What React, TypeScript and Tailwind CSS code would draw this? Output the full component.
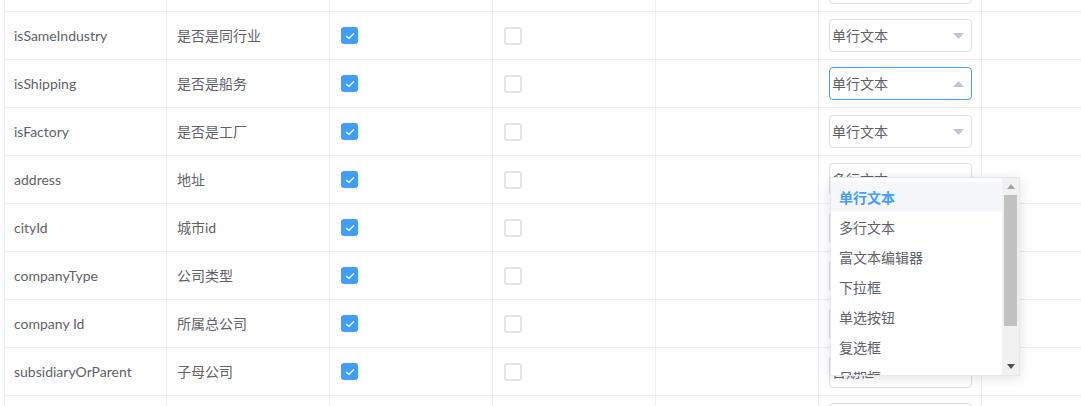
import React from 'react';

type Row = {
    field: string;
    label: string;
    required: boolean;
    control: string;
};

const rows: Row[] = [
    { field: '', label: '', required: false, control: '单行文本' },
    { field: 'isSameIndustry', label: '是否是同行业', required: true, control: '单行文本' },
    { field: 'isShipping', label: '是否是船务', required: true, control: '单行文本' },
    { field: 'isFactory', label: '是否是工厂', required: true, control: '单行文本' },
    { field: 'address', label: '地址', required: true, control: '多行文本' },
    { field: 'cityId', label: '城市id', required: true, control: '单行文本' },
    { field: 'companyType', label: '公司类型', required: true, control: '单行文本' },
    { field: 'company Id', label: '所属总公司', required: true, control: '单行文本' },
    { field: 'subsidiaryOrParent', label: '子母公司', required: true, control: '日期框' },
    { field: 'subsidiaryOrGroup', label: '', required: true, control: '单行文本' },
];

const options = ['单行文本', '多行文本', '富文本编辑器', '下拉框', '单选按钮', '复选框', '日期框'];

const Checkbox: React.FC<{ checked: boolean }> = ({ checked }) =>
    checked ? (
        <span className="flex h-[17px] w-[17px] items-center justify-center rounded-[3px] bg-[#409eff]">
            <svg width="10" height="8" viewBox="0 0 10 8" fill="none">
                <path d="M1.5 4.2 L4 6.4 L8.6 1.8" stroke="white" strokeWidth="1.3" strokeLinecap="round" strokeLinejoin="round" />
            </svg>
        </span>
    ) : (
        <span className="block h-[18px] w-[18px] rounded-[3px] border-2 border-[#e2e5eb] bg-white" />
    );

const Select: React.FC<{ value: string; open?: boolean }> = ({ value, open }) => (
    <div
        className={`flex h-[33px] w-[143px] items-center justify-between rounded-[4px] border bg-white pl-[2px] pr-[7px] ${
            open ? 'border-[#409eff]' : 'border-[#dcdfe6]'
        }`}
    >
        <span className="text-[14px] text-[#606266]">{value}</span>
        <svg width="11" height="6" viewBox="0 0 11 6" className={open ? 'rotate-180' : ''}>
            <path d="M0 0 H11 L5.5 6 Z" fill="#c0c4cc" />
        </svg>
    </div>
);

const App: React.FC = () => {
    return (
        <div
            className="relative h-[406px] w-[1081px] overflow-hidden bg-white"
            style={{ fontFamily: 'Lato, "Noto Sans CJK SC", sans-serif' }}
        >
            <div className="ml-[4px] mt-[-36px] border-l border-[#ebeef5]">
                {rows.map((row, i) => (
                    <div key={i} className="flex h-[48px] border-b border-[#ebeef5]">
                        <div className="flex w-[162px] items-center border-r border-[#ebeef5] pb-[1px] pl-[9px] text-[14px] text-[#606266]">
                            {row.field}
                        </div>
                        <div className="flex w-[163px] items-center border-r border-[#ebeef5] pb-[1px] pl-[10px] text-[14px] text-[#606266]">
                            {row.label}
                        </div>
                        <div className="flex w-[163px] items-center border-r border-[#ebeef5] pl-[11px]">
                            {i > 0 && <Checkbox checked={row.required} />}
                        </div>
                        <div className="flex w-[163px] items-center border-r border-[#ebeef5] pl-[11px]">
                            {i > 0 && <Checkbox checked={false} />}
                        </div>
                        <div className="w-[163px] border-r border-[#ebeef5]" />
                        <div className="flex w-[163px] items-center border-r border-[#ebeef5] pl-[10px]">
                            <Select value={row.control} open={i === 2} />
                        </div>
                        <div className="flex-1" />
                    </div>
                ))}
            </div>

            {/* dropdown of the open select */}
            <div className="absolute left-[830px] top-[177px] flex h-[199px] w-[190px] overflow-hidden border border-[#e4e7ed] bg-white shadow-[0_2px_12px_rgba(0,0,0,0.12)]">
                <ul className="flex-1 pt-[4px]">
                    {options.map((opt, i) => (
                        <li
                            key={opt}
                            className={`flex h-[30px] items-center pl-[8px] text-[14px] ${
                                i === 0 ? 'bg-[#f5f7fa] font-bold text-[#409eff]' : 'text-[#606266]'
                            }`}
                        >
                            {opt}
                        </li>
                    ))}
                </ul>
                <div className="flex w-[17px] flex-col items-center bg-[#f1f1f1]">
                    <div className="flex h-[17px] items-center justify-center">
                        <svg width="8" height="5" viewBox="0 0 8 5">
                            <path d="M0 5 L4 0 L8 5 Z" fill="#a3a3a3" />
                        </svg>
                    </div>
                    <div className="h-[131px] w-[13px] bg-[#c1c1c1]" />
                    <div className="flex-1" />
                    <div className="flex h-[17px] items-center justify-center">
                        <svg width="8" height="5" viewBox="0 0 8 5">
                            <path d="M0 0 L8 0 L4 5 Z" fill="#505050" />
                        </svg>
                    </div>
                </div>
            </div>
        </div>
    );
};

export default App;
